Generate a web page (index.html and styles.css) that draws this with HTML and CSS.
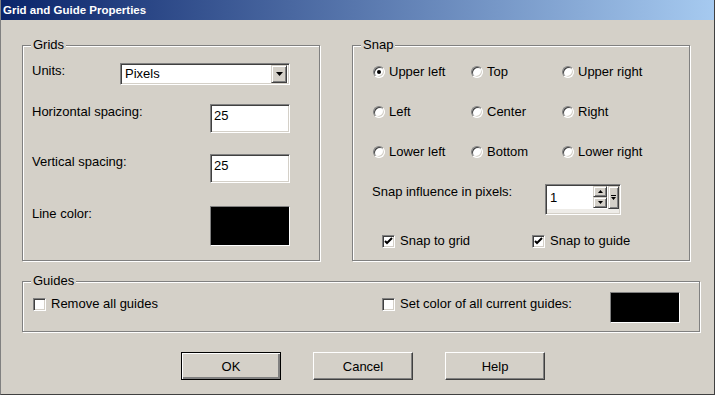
FILE: index.html
```html
<html>

<head>
  <title>Grid and Guide Properties</title>
  <link rel="stylesheet" href="styles.css">
</head>

<body>

  <div class="window">
    <div class="titlebar">Grid and Guide Properties</div>

    <div class="content">
      <div class="top-row">
        <fieldset class="group grids">
          <legend>Grids</legend>
          <div class="grid-rows">
            <div class="row">
              <label>Units:</label>
              <div class="select">
                <span class="select-value">Pixels</span>
                <span class="drop-btn">
                  <svg width="7" height="4" viewBox="0 0 7 4"><path d="M0 0h7L3.5 4z" fill="#000"/></svg>
                </span>
              </div>
            </div>
            <div class="row">
              <label>Horizontal spacing:</label>
              <div class="textbox">25</div>
            </div>
            <div class="row">
              <label>Vertical spacing:</label>
              <div class="textbox">25</div>
            </div>
            <div class="row">
              <label>Line color:</label>
              <div class="swatch line-swatch"></div>
            </div>
          </div>
        </fieldset>

        <fieldset class="group snap">
          <legend>Snap</legend>
          <div class="radio-grid">
            <div class="option"><span class="radio checked"></span>Upper left</div>
            <div class="option"><span class="radio"></span>Top</div>
            <div class="option"><span class="radio"></span>Upper right</div>
            <div class="option"><span class="radio"></span>Left</div>
            <div class="option"><span class="radio"></span>Center</div>
            <div class="option"><span class="radio"></span>Right</div>
            <div class="option"><span class="radio"></span>Lower left</div>
            <div class="option"><span class="radio"></span>Bottom</div>
            <div class="option"><span class="radio"></span>Lower right</div>
          </div>

          <div class="influence">
            <label>Snap influence in pixels:</label>
            <div class="spin">
              <div class="spin-main">
                <span class="spin-value">1</span>
                <span class="spin-arrows">
                  <span class="spin-btn">
                    <svg width="5" height="3" viewBox="0 0 5 3"><path d="M2.5 0L5 3H0z" fill="#000"/></svg>
                  </span>
                  <span class="spin-btn">
                    <svg width="5" height="3" viewBox="0 0 5 3"><path d="M0 0h5L2.5 3z" fill="#000"/></svg>
                  </span>
                </span>
                <span class="spin-drop">
                  <svg width="5" height="5" viewBox="0 0 5 5"><path d="M0 0h5v1H0z M0 2h5L2.5 5z" fill="#000"/></svg>
                </span>
              </div>
            </div>
          </div>

          <div class="snap-checks">
            <div class="option check-item"><span class="checkbox checked"><svg width="9" height="9" viewBox="0 0 9 9"><path d="M1 4l2 2 5-5" stroke="#000" stroke-width="2" fill="none"/></svg></span>Snap to grid</div>
            <div class="option"><span class="checkbox checked"><svg width="9" height="9" viewBox="0 0 9 9"><path d="M1 4l2 2 5-5" stroke="#000" stroke-width="2" fill="none"/></svg></span>Snap to guide</div>
          </div>
        </fieldset>
      </div>

      <fieldset class="group guides">
        <legend>Guides</legend>
        <div class="guides-row">
          <div class="option guide-remove"><span class="checkbox"></span>Remove all guides</div>
          <div class="option"><span class="checkbox"></span>Set color of all current guides:</div>
          <div class="swatch guide-swatch"></div>
        </div>
      </fieldset>

      <div class="buttons">
        <button class="default">OK</button>
        <button>Cancel</button>
        <button>Help</button>
      </div>
    </div>
  </div>

</body>

</html>
```

FILE: styles.css
```css
:root {
  --face: #d4d0c8;
  --shadow: #808080;
  --dark: #404040;
  --light: #ffffff;
}

* {
  margin: 0;
  padding: 0;
  box-sizing: border-box;
}

body {
  background: var(--face);
  font-family: "Liberation Sans", Arial, sans-serif;
  font-size: 13px;
  color: #000;
}

.window {
  width: 715px;
  height: 395px;
  background: var(--face);
  border-left: 1px solid var(--shadow);
  border-right: 1px solid var(--dark);
  border-bottom: 1px solid var(--dark);
  overflow: hidden;
}

.titlebar {
  height: 20px;
  line-height: 20px;
  padding-left: 2px;
  color: #fff;
  font-weight: bold;
  font-size: 11.5px;
  background: linear-gradient(to right, #0a246a, #a6caf0);
}

.content {
  padding: 18px 0 0 21px;
}

/* group boxes */

.group {
  border: 1px solid var(--shadow);
  box-shadow: 1px 1px 0 var(--light), inset 1px 1px 0 var(--light);
  padding: 0;
  min-width: 0;
}

.group legend {
  margin-left: 8px;
  padding: 0 2px;
  line-height: 14px;
  background: var(--face);
}

.top-row {
  display: flex;
  gap: 32px;
  height: 223px;
}

.grids {
  width: 298px;
}

.snap {
  width: 338px;
}

/* grids */

.grid-rows {
  display: grid;
  grid-template-rows: 41px 50px 52px 40px;
  padding: 11px 29px 0 9px;
}

.row {
  display: flex;
  justify-content: space-between;
  align-items: flex-start;
}

.row label {
  line-height: 16px;
}

.select,
.textbox,
.spin {
  border: 1px solid;
  border-color: var(--shadow) var(--light) var(--light) var(--shadow);
  box-shadow: inset 1px 1px 0 var(--dark), inset -1px -1px 0 var(--face);
  background: #fff;
}

.select {
  width: 170px;
  height: 22px;
  display: flex;
  align-items: center;
  justify-content: space-between;
  padding: 2px;
}

.select-value {
  padding-left: 2px;
  line-height: 16px;
}

.drop-btn,
.spin-btn,
.spin-drop {
  display: flex;
  align-items: center;
  justify-content: center;
  background: var(--face);
  border: 1px solid;
  border-color: var(--face) var(--dark) var(--dark) var(--face);
  box-shadow: inset 1px 1px 0 var(--light), inset -1px -1px 0 var(--shadow);
}

.drop-btn {
  width: 16px;
  height: 18px;
}

.textbox {
  width: 80px;
  height: 29px;
  padding: 3px 3px 0;
  line-height: 16px;
}

.swatch {
  background: #000;
  border: 1px solid;
  border-color: var(--shadow) var(--light) var(--light) var(--shadow);
}

.line-swatch {
  width: 80px;
  height: 40px;
}

/* snap */

.option {
  display: flex;
  align-items: center;
  line-height: 16px;
}

.radio-grid {
  display: grid;
  grid-template-columns: 98px 91px auto;
  grid-auto-rows: 40px;
  padding: 12px 0 0 20px;
}

.radio-grid .option {
  align-items: flex-start;
}

.radio {
  position: relative;
  width: 12px;
  height: 12px;
  margin: 2px 4px 0 0;
  border-radius: 50%;
  border: 1px solid;
  border-color: var(--shadow) var(--light) var(--light) var(--shadow);
  box-shadow: inset 1px 1px 0 var(--dark), inset -1px -1px 0 var(--face);
  background: #fff;
}

.radio.checked::after {
  content: "";
  position: absolute;
  left: 3px;
  top: 3px;
  width: 4px;
  height: 4px;
  border-radius: 50%;
  background: #000;
}

.influence {
  display: flex;
  align-items: flex-start;
  padding: 0 0 0 19px;
}

.influence label {
  width: 173px;
  line-height: 16px;
  padding-top: 0;
}

.spin {
  width: 76px;
  height: 31px;
  background: #eeece8;
  padding: 1px;
}

.spin-main {
  display: flex;
  height: 23px;
  background: #fff;
}

.spin-value {
  flex: 1;
  padding: 4px 0 0 3px;
  line-height: 16px;
}

.spin-arrows {
  display: flex;
  flex-direction: column;
  width: 14px;
}

.spin-btn {
  height: 11px;
}

.spin-drop {
  width: 11px;
  margin-left: 1px;
}

.snap-checks {
  display: flex;
  padding: 18px 0 0 29px;
}

.check-item {
  width: 150px;
}

.checkbox {
  display: flex;
  align-items: center;
  justify-content: center;
  width: 13px;
  height: 13px;
  margin-right: 5px;
  border: 1px solid;
  border-color: var(--shadow) var(--light) var(--light) var(--shadow);
  box-shadow: inset 1px 1px 0 var(--dark), inset -1px -1px 0 var(--face);
  background: #fff;
}

/* guides */

.guides {
  width: 678px;
  height: 58px;
  margin-top: 13px;
}

.guides-row {
  display: flex;
  align-items: flex-start;
  padding: 4px 19px 0 10px;
}

.guides-row .option {
  margin-top: 4px;
}

.guide-remove {
  width: 349px;
}

.guide-swatch {
  width: 70px;
  height: 31px;
  margin-left: auto;
}

/* buttons */

.buttons {
  display: flex;
  gap: 32px;
  padding: 20px 0 0 159px;
}

button {
  width: 100px;
  height: 28px;
  font-family: "Liberation Sans", Arial, sans-serif;
  font-size: 13px;
  color: #000;
  background: var(--face);
  border: 1px solid;
  border-color: var(--light) var(--dark) var(--dark) var(--light);
  box-shadow: inset -1px -1px 0 var(--shadow);
}

button.default {
  border: 1px solid #000;
  box-shadow: inset 1px 1px 0 var(--light), inset -2px -2px 0 var(--shadow), inset -1px -1px 0 var(--dark);
}
```
